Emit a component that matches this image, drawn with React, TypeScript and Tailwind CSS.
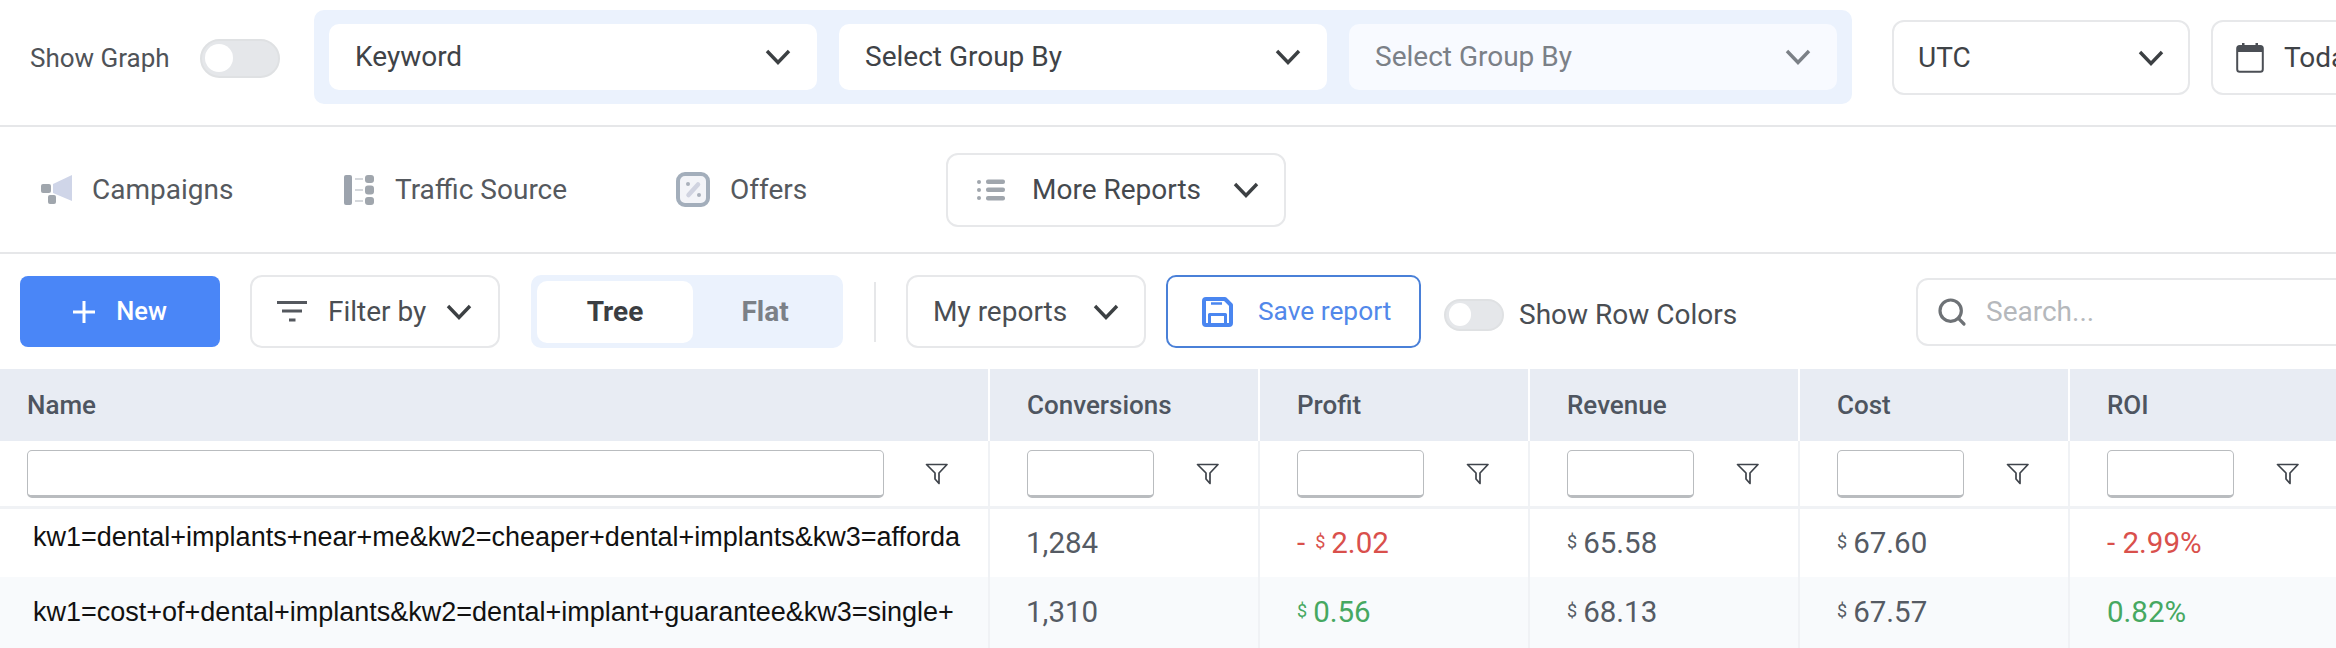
import type { ReactNode } from "react";
import { Search } from "lucide-react";

function Chevron({ className = "text-[#3c4043]" }: { className?: string }) {
  return (
    <svg viewBox="0 0 26 16" className={`w-[26px] h-[16px] shrink-0 ${className}`} fill="none" stroke="currentColor" strokeWidth="3.4">
      <path d="M2 2 L13 13.5 L24 2" />
    </svg>
  );
}

function FunnelIcon() {
  return (
    <svg viewBox="0 0 24 22" className="w-[24px] h-[22px] shrink-0" fill="none" stroke="#3f444b" strokeWidth="1.7" strokeLinejoin="round">
      <path d="M1.5 1.5 H22 L14 10 V20.5 L10 16 V10 Z" />
    </svg>
  );
}

function Toggle({ className }: { className: string }) {
  return (
    <div className={`rounded-full bg-[#e5e7ea] border-[2px] border-[#dfe1e3] flex items-center shrink-0 ${className}`}>
      <div className="h-[80%] aspect-square rounded-full bg-white ml-[3px]" />
    </div>
  );
}

function GroupSelect({ label, disabled }: { label: string; disabled?: boolean }) {
  return (
    <div className={`w-[488px] h-[66px] rounded-[10px] flex items-center justify-between pl-[26px] pr-[26px] text-[28px] ${disabled ? "bg-[#f8faff] text-[#7b8087]" : "bg-white text-[#3f4347]"}`}>
      <span>{label}</span>
      <Chevron className={disabled ? "text-[#7b8087]" : "text-[#3c4043]"} />
    </div>
  );
}

function FilterCell({ first }: { first?: boolean }) {
  return (
    <div className={`h-full shrink-0 flex items-center border-r-[2px] border-[#f0f2f5] ${first ? "w-[990px] pl-[27px]" : "w-[270px] pl-[37px]"}`}>
      <div className={`h-[48px] rounded-[5px] bg-white border-[1.5px] border-b-[3px] border-[#b9bcbf] ${first ? "w-[857px]" : "w-[127px]"}`} />
      <div className={first ? "ml-[41px]" : "ml-[42px]"}>
        <FunnelIcon />
      </div>
    </div>
  );
}

function Money({ value, color = "text-[#555b64]", minus }: { value: string; color?: string; minus?: boolean }) {
  return (
    <span className={`flex items-center ${color}`}>
      {minus && <span className="mr-[10px]">-</span>}
      <span className="text-[18px] mr-[6px] -mt-[4px]">$</span>
      <span>{value}</span>
    </span>
  );
}

function DataRow({ name, conv, cells, striped, nameClass, rowClass }: { name: string; conv: string; cells: ReactNode[]; striped?: boolean; nameClass: string; rowClass: string }) {
  return (
    <div className={`flex text-[29.5px] text-[#555b64] ${rowClass} ${striped ? "bg-[#f8fafc]" : "bg-white"}`}>
      <div className={`w-[990px] shrink-0 pl-[33px] flex items-center border-r-[2px] border-[#f0f2f5] text-[27px] text-[#111] font-['Liberation_Sans',Arial,sans-serif] overflow-hidden whitespace-nowrap ${nameClass}`}>
        {name}
      </div>
      <div className="w-[270px] shrink-0 pl-[36px] flex items-center border-r-[2px] border-[#f0f2f5]">{conv}</div>
      {cells.map((c, i) => (
        <div key={i} className="w-[270px] shrink-0 pl-[37px] flex items-center border-r-[2px] border-[#f0f2f5]">
          {c}
        </div>
      ))}
    </div>
  );
}

export default function App() {
  return (
    <div className="w-[2336px] h-[648px] overflow-hidden bg-white font-['Roboto',sans-serif] text-[#4f5358]">
      {/* Top bar */}
      <div className="h-[127px] border-b-[2px] border-[#e6e7e9] flex items-start whitespace-nowrap">
        <div className="h-[116px] flex items-center pl-[30px] shrink-0">
          <span className="text-[26px] w-[170px]">Show Graph</span>
          <Toggle className="w-[80px] h-[39px]" />
        </div>
        <div className="ml-[34px] mt-[10px] w-[1538px] h-[94px] shrink-0 bg-[#ebf2fd] rounded-[10px] flex items-center gap-[22px] px-[15px]">
          <GroupSelect label="Keyword" />
          <GroupSelect label="Select Group By" />
          <GroupSelect label="Select Group By" disabled />
        </div>
        <div className="ml-[40px] mt-[20px] w-[298px] h-[75px] shrink-0 rounded-[12px] border-[2px] border-[#e7e8ea] flex items-center justify-between pl-[24px] pr-[24px] text-[28px] text-[#3f4347]">
          <span>UTC</span>
          <Chevron />
        </div>
        <div className="ml-[21px] mt-[20px] w-[300px] h-[75px] shrink-0 rounded-[12px] border-[2px] border-[#e7e8ea] flex items-center pl-[23px] text-[28px] text-[#3f4347]">
          <svg viewBox="0 0 28 30" className="w-[28px] h-[30px] shrink-0">
            <rect x="1.2" y="3" width="25.6" height="25.8" rx="2.5" fill="none" stroke="#4b4f55" strokeWidth="2" />
            <path d="M1 5 a2 2 0 0 1 2-2 H25 a2 2 0 0 1 2 2 V9 H1 Z" fill="#4b4f55" />
            <rect x="6" y="0" width="2.5" height="4" fill="#4b4f55" />
            <rect x="19.5" y="0" width="2.5" height="4" fill="#4b4f55" />
          </svg>
          <span className="ml-[20px]">Today</span>
        </div>
      </div>

      {/* Report tabs */}
      <div className="h-[127px] border-b-[2px] border-[#e6e7e9] flex items-center pl-[41px] whitespace-nowrap text-[28px] text-[#55595e]">
        <svg viewBox="0 0 31 29" className="w-[31px] h-[29px] shrink-0">
          <path d="M12 9 L31 0 V26 L12 18 Z" fill="#cfd5e8" />
          <rect x="0" y="9" width="10" height="9" rx="2" fill="#a0a6ad" />
          <rect x="7" y="20" width="8" height="9" rx="2" fill="#a0a6ad" />
        </svg>
        <span className="ml-[20px] w-[252px]">Campaigns</span>
        <svg viewBox="0 0 30 30" className="w-[30px] h-[30px] shrink-0">
          <rect x="0" y="0" width="8" height="30" rx="2" fill="#9ca3ad" />
          <rect x="21" y="0" width="9" height="8" rx="3" fill="#a0a6ad" />
          <rect x="21" y="10.5" width="9" height="9" rx="3" fill="#a0a6ad" />
          <rect x="21" y="22" width="9" height="8" rx="3" fill="#a0a6ad" />
          <rect x="11" y="3" width="8" height="2" fill="#d5d8dc" />
          <rect x="11" y="14" width="8" height="2" fill="#d5d8dc" />
          <rect x="11" y="25" width="8" height="2" fill="#d5d8dc" />
        </svg>
        <span className="ml-[21px] w-[281px]">Traffic Source</span>
        <svg viewBox="0 0 34 35" className="w-[34px] h-[35px] shrink-0">
          <rect x="2" y="2" width="30" height="31" rx="7" fill="#f3f4f8" stroke="#a3aebb" strokeWidth="4" />
          <path d="M22 12.5 L12.5 23" stroke="#d0d3e0" strokeWidth="4.5" strokeLinecap="round" />
          <circle cx="12" cy="12" r="2" fill="#aab0bb" />
          <circle cx="23" cy="23" r="2" fill="#aab0bb" />
        </svg>
        <span className="ml-[20px] w-[216px]">Offers</span>
        <div className="w-[340px] h-[74px] shrink-0 rounded-[12px] border-[2px] border-[#e7e8ea] flex items-center pl-[29px] text-[#45494e]">
          <svg viewBox="0 0 28 22" className="w-[28px] h-[22px] shrink-0">
            <g fill="#a0a6ad">
              <circle cx="2" cy="3" r="2" />
              <circle cx="2" cy="11" r="2" />
              <circle cx="2" cy="19" r="2" />
              <rect x="9" y="0.5" width="19" height="4.5" rx="2" />
              <rect x="9" y="8.5" width="19" height="4.5" rx="2" />
              <rect x="9" y="17" width="19" height="4.5" rx="2" />
            </g>
          </svg>
          <span className="ml-[27px]">More Reports</span>
          <span className="ml-[32px]">
            <Chevron />
          </span>
        </div>
      </div>

      {/* Toolbar */}
      <div className="h-[115px] flex items-center pl-[20px] whitespace-nowrap text-[28px] text-[#4a4e53]">
        <div className="w-[200px] h-[71px] shrink-0 rounded-[8px] bg-[#4a86f7] flex items-center justify-center text-white text-[25.5px] font-medium">
          <svg viewBox="0 0 22 22" className="w-[22px] h-[22px] mr-[21px]" stroke="#fff" strokeWidth="3">
            <path d="M11 0 V22 M0 11 H22" />
          </svg>
          New
        </div>
        <div className="ml-[30px] w-[250px] h-[73px] shrink-0 rounded-[12px] border-[2px] border-[#e7e8ea] flex items-center pl-[25px]">
          <svg viewBox="0 0 30 21" className="w-[30px] h-[21px] shrink-0" fill="#54585e">
            <rect x="0" y="0" width="30" height="3" />
            <rect x="5" y="8.5" width="20" height="3" />
            <rect x="12" y="17.5" width="6.5" height="3" />
          </svg>
          <span className="ml-[21px]">Filter by</span>
          <span className="ml-[20px]">
            <Chevron />
          </span>
        </div>
        <div className="ml-[31px] w-[312px] h-[73px] shrink-0 rounded-[10px] bg-[#ebf2fd] flex items-center pl-[6px] font-bold">
          <div className="w-[156px] h-[62px] rounded-[10px] bg-white flex items-center justify-center text-[#3b3e42]">Tree</div>
          <div className="flex-1 pr-[6px] text-center text-[#7b8087]">Flat</div>
        </div>
        <div className="ml-[31px] w-[2px] h-[60px] shrink-0 bg-[#e6e7e9]" />
        <div className="ml-[30px] w-[240px] h-[73px] shrink-0 rounded-[12px] border-[2px] border-[#e7e8ea] flex items-center pl-[25px]">
          <span>My reports</span>
          <span className="ml-[26px]">
            <Chevron />
          </span>
        </div>
        <div className="ml-[20px] w-[255px] h-[73px] shrink-0 rounded-[10px] border-[2px] border-[#4a80d8] flex items-center pl-[34px] text-[#5288ea] text-[26.3px]">
          <svg viewBox="0 0 31 30" className="w-[31px] h-[30px] shrink-0" fill="none" stroke="#4a86f0" strokeLinejoin="round">
            <path d="M2 4 a2 2 0 0 1 2-2 H23 L29 8 V26 a2 2 0 0 1-2 2 H4 a2 2 0 0 1-2-2 Z" strokeWidth="4" />
            <path d="M9 6.5 H20" strokeWidth="2.5" />
            <path d="M7.5 28 V17.5 H23.5 V28" strokeWidth="3" />
          </svg>
          <span className="ml-[25px]">Save report</span>
        </div>
        <Toggle className="ml-[23px] w-[60px] h-[32px] mt-[6px]" />
        <span className="ml-[15px] w-[397px] shrink-0 mt-[6px]">Show Row Colors</span>
        <div className="w-[500px] h-[68px] shrink-0 rounded-[12px] border-[2px] border-[#e7e8ea] flex items-center pl-[18px] text-[#b5b8bc]">
          <Search className="w-[32px] h-[32px] text-[#6e7276] shrink-0" strokeWidth={2.4} />
          <span className="ml-[18px]">Search...</span>
        </div>
      </div>

      {/* Table */}
      <div className="h-[72px] bg-[#e8ecf3] flex text-[26px] font-medium text-[#4e5560] whitespace-nowrap">
        <div className="w-[990px] shrink-0 pl-[27px] flex items-center border-r-[2px] border-white">Name</div>
        {["Conversions", "Profit", "Revenue", "Cost", "ROI"].map((h) => (
          <div key={h} className="w-[270px] shrink-0 pl-[37px] flex items-center border-r-[2px] border-white">
            {h}
          </div>
        ))}
      </div>
      <div className="h-[68px] flex border-b-[3px] border-[#f0f2f5]">
        <FilterCell first />
        <FilterCell />
        <FilterCell />
        <FilterCell />
        <FilterCell />
        <FilterCell />
      </div>
      <DataRow
        rowClass="h-[68px]"
        name="kw1=dental+implants+near+me&kw2=cheaper+dental+implants&kw3=afforda"
        conv="1,284"
        nameClass="pb-[12px]"
        cells={[
          <Money value="2.02" color="text-[#d9504c]" minus />,
          <Money value="65.58" />,
          <Money value="67.60" />,
          <span className="text-[#d9504c]">- 2.99%</span>,
        ]}
      />
      <DataRow
        rowClass="h-[71px]"
        striped
        name="kw1=cost+of+dental+implants&kw2=dental+implant+guarantee&kw3=single+"
        conv="1,310"
        nameClass=""
        cells={[
          <Money value="0.56" color="text-[#46a861]" />,
          <Money value="68.13" />,
          <Money value="67.57" />,
          <span className="text-[#46a861]">0.82%</span>,
        ]}
      />
    </div>
  );
}
